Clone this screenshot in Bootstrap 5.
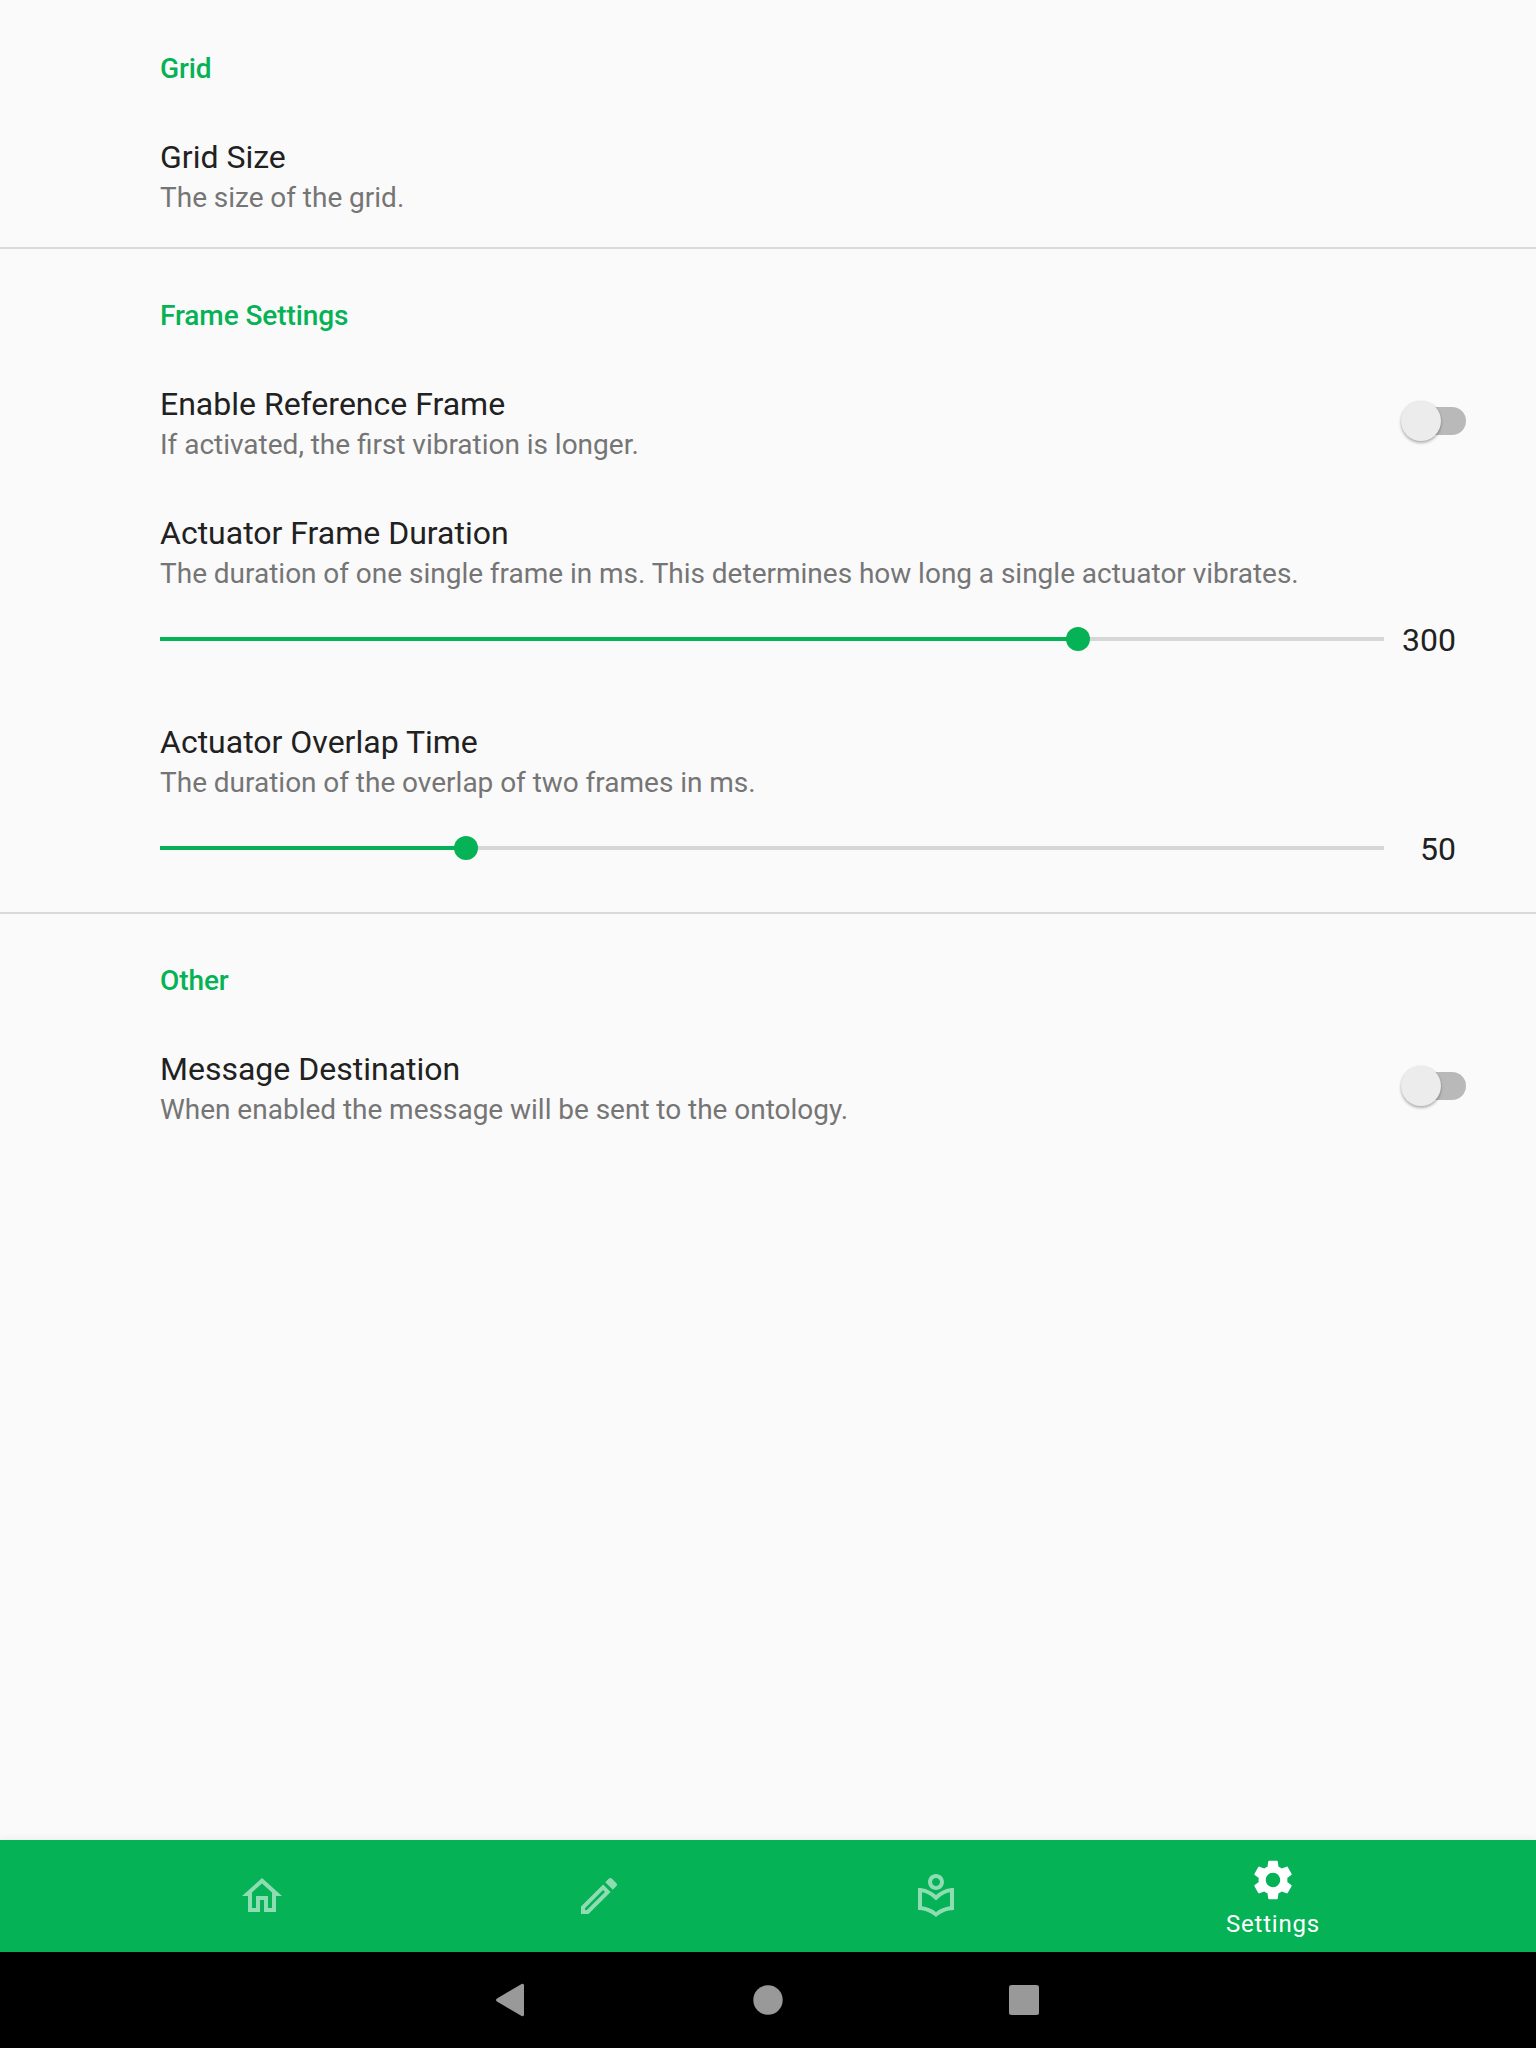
<!DOCTYPE html>
<html lang="en">
<head>
<meta charset="utf-8">
<meta name="viewport" content="width=device-width, initial-scale=1">
<title>Settings</title>
<link href="https://cdn.jsdelivr.net/npm/bootstrap@5.3.0/dist/css/bootstrap.min.css" rel="stylesheet">
<style>
  :root { --accent: #05b255; }
  body { font-family: Roboto, "Noto Sans", sans-serif; background: #fafafa; color: #212121; }
  .app-screen { height: 2048px; overflow: hidden; }
  .pref-group { border-top: 2px solid #dadada; }
  .pref-group:first-child { border-top-color: transparent; }
  .pref-heading { font-size: 28px; line-height: 33px; font-weight: 500; letter-spacing: -.08px; color: var(--accent); padding: 50px 0 33px 160px; }
  .pref-item { padding: 20px 70px 33px 160px; }
  .pref-title { font-size: 32px; line-height: 38px; font-weight: 400; }
  .pref-text { font-size: 28px; line-height: 33px; margin-top: 5px; word-spacing: -.15px; color: #757575; }
  .slider-item { padding-bottom: 44px; }
  .slider-line { height: 38px; margin-top: 31px; }
  .slider-track { width: 1224px; height: 4px; margin-bottom: 2px; background: #d6d6d6; }
  .slider-fill { height: 4px; background: var(--accent); }
  .slider-thumb { width: 24px; height: 24px; margin-right: -12px; border-radius: 50%; background: var(--accent); }
  .slider-value { width: 72px; font-size: 32px; line-height: 38px; }
  .toggle-track { width: 60px; height: 28px; margin-bottom: 4px; border-radius: 14px; background: #b9b9b9; }
  .toggle-thumb { width: 40px; height: 40px; margin-left: -5px; border-radius: 50%; background: #ececec; box-shadow: 0 2px 3px rgba(0,0,0,.28), 0 0 2px rgba(0,0,0,.1); }
  .tab-bar { height: 112px; padding-right: 1px; background: var(--accent); box-shadow: 0 -1px 8px rgba(0,0,0,.06); }
  .tab-link { width: 337px; color: rgba(255,255,255,.55); }
  .tab-link.current { color: #fff; }
  .tab-link svg { width: 48px; height: 48px; fill: currentColor; }
  .tab-label { font-size: 24px; line-height: 24px; margin-top: 8px; letter-spacing: .8px; }
  .system-bar { height: 96px; background: #000; }
  .system-bar svg { width: 256px; height: 96px; fill: #999; }
</style>
<script src="https://cdn.jsdelivr.net/npm/bootstrap@5.3.0/dist/js/bootstrap.bundle.min.js"></script>
</head>
<body>
<div class="app-screen d-flex flex-column">
  <main class="flex-grow-1">
    <section class="pref-group">
      <h2 class="pref-heading m-0">Grid</h2>
      <div class="pref-item">
        <div class="pref-title">Grid Size</div>
        <div class="pref-text">The size of the grid.</div>
      </div>
    </section>
    <section class="pref-group">
      <h2 class="pref-heading m-0">Frame Settings</h2>
      <div class="pref-item d-flex justify-content-between align-items-center">
        <div>
          <div class="pref-title">Enable Reference Frame</div>
          <div class="pref-text">If activated, the first vibration is longer.</div>
        </div>
        <div class="toggle-track d-flex align-items-center" role="switch" aria-checked="false"><div class="toggle-thumb"></div></div>
      </div>
      <div class="pref-item slider-item">
        <div class="pref-title">Actuator Frame Duration</div>
        <div class="pref-text">The duration of one single frame in ms. This determines how long a single actuator vibrates.</div>
        <div class="slider-line d-flex align-items-center">
          <div class="slider-track"><div class="slider-fill d-flex align-items-center justify-content-end" style="width:75%"><div class="slider-thumb flex-shrink-0"></div></div></div>
          <div class="slider-value text-end">300</div>
        </div>
      </div>
      <div class="pref-item slider-item">
        <div class="pref-title">Actuator Overlap Time</div>
        <div class="pref-text">The duration of the overlap of two frames in ms.</div>
        <div class="slider-line d-flex align-items-center">
          <div class="slider-track"><div class="slider-fill d-flex align-items-center justify-content-end" style="width:25%"><div class="slider-thumb flex-shrink-0"></div></div></div>
          <div class="slider-value text-end">50</div>
        </div>
      </div>
    </section>
    <section class="pref-group">
      <h2 class="pref-heading m-0">Other</h2>
      <div class="pref-item d-flex justify-content-between align-items-center">
        <div>
          <div class="pref-title">Message Destination</div>
          <div class="pref-text">When enabled the message will be sent to the ontology.</div>
        </div>
        <div class="toggle-track d-flex align-items-center" role="switch" aria-checked="false"><div class="toggle-thumb"></div></div>
      </div>
    </section>
  </main>
  <nav class="tab-bar d-flex justify-content-center flex-shrink-0">
    <a class="tab-link d-flex flex-column align-items-center justify-content-center text-decoration-none" aria-label="Home">
      <svg viewBox="0 0 24 24"><path d="M12 5.69l5 4.5V18h-2v-6H9v6H7v-7.81l5-4.5M12 3L2 12h3v8h6v-6h2v6h6v-8h3L12 3z"/></svg>
    </a>
    <a class="tab-link d-flex flex-column align-items-center justify-content-center text-decoration-none" aria-label="Edit">
      <svg viewBox="0 0 24 24"><path d="M14.06 9.02l.92.92L5.92 19H5v-.92l9.06-9.06M17.66 3c-.25 0-.51.1-.7.29l-1.83 1.83 3.75 3.75 1.83-1.83c.39-.39.39-1.02 0-1.41l-2.34-2.34c-.2-.2-.45-.29-.71-.29zm-3.6 3.19L3 17.25V21h3.75L17.81 9.94l-3.75-3.75z"/></svg>
    </a>
    <a class="tab-link d-flex flex-column align-items-center justify-content-center text-decoration-none" aria-label="Library">
      <svg viewBox="0 0 24 24"><path d="M16 5c0-2.21-1.79-4-4-4S8 2.79 8 5s1.79 4 4 4 4-1.79 4-4zm-4 2c-1.1 0-2-.9-2-2s.9-2 2-2 2 .9 2 2-.9 2-2 2zm0 4.55C9.64 9.35 6.48 8 3 8v11c3.48 0 6.64 1.35 9 3.55 2.36-2.19 5.52-3.55 9-3.55V8c-3.48 0-6.64 1.35-9 3.55zm7 5.58c-2.53.34-4.93 1.3-7 2.82-2.06-1.52-4.47-2.49-7-2.83v-6.95c2.1.38 4.05 1.35 5.64 2.83L12 14.28l1.36-1.27c1.59-1.48 3.54-2.45 5.64-2.83v6.95z"/></svg>
    </a>
    <a class="tab-link current d-flex flex-column align-items-center justify-content-center text-decoration-none" aria-current="page">
      <svg viewBox="0 0 24 24"><path d="M19.14 12.94c.04-.3.06-.61.06-.94 0-.32-.02-.64-.07-.94l2.03-1.58c.18-.14.23-.41.12-.61l-1.92-3.32c-.12-.22-.37-.29-.59-.22l-2.39.96c-.5-.38-1.03-.7-1.62-.94l-.36-2.54c-.04-.24-.24-.41-.48-.41h-3.84c-.24 0-.43.17-.47.41l-.36 2.54c-.59.24-1.13.57-1.62.94l-2.39-.96c-.22-.08-.47 0-.59.22L2.74 8.87c-.12.21-.08.47.12.61l2.03 1.58c-.05.3-.09.63-.09.94s.02.64.07.94l-2.03 1.58c-.18.14-.23.41-.12.61l1.92 3.32c.12.22.37.29.59.22l2.39-.96c.5.38 1.03.7 1.62.94l.36 2.54c.05.24.24.41.48.41h3.84c.24 0 .44-.17.47-.41l.36-2.54c.59-.24 1.13-.56 1.62-.94l2.39.96c.22.08.47 0 .59-.22l1.92-3.32c.12-.22.07-.47-.12-.61l-2.01-1.58zM12 15.6c-1.98 0-3.6-1.62-3.6-3.6s1.62-3.6 3.6-3.6 3.6 1.62 3.6 3.6-1.62 3.6-3.6 3.6z"/></svg>
      <span class="tab-label">Settings</span>
    </a>
  </nav>
  <div class="system-bar d-flex justify-content-center flex-shrink-0">
    <svg viewBox="0 0 256 96"><path d="M113 46.4L137.6 32Q140 31 140 33.5V62.5Q140 65 137.6 64L113 49.6Q111 48 113 46.4Z"/></svg>
    <svg viewBox="0 0 256 96"><circle cx="128" cy="48" r="14.7"/></svg>
    <svg viewBox="0 0 256 96"><rect x="113" y="33" width="30" height="30" rx="2.5"/></svg>
  </div>
</div>
</body>
</html>
